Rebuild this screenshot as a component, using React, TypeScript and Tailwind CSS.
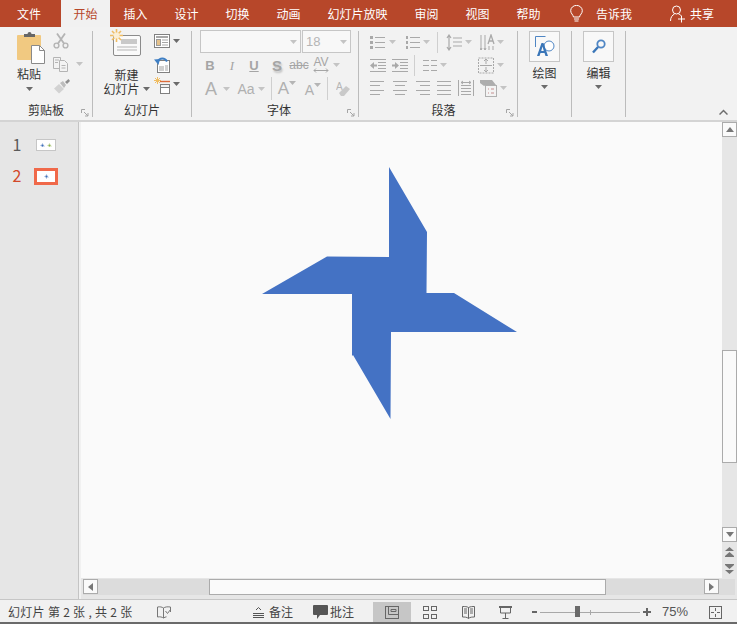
import React from "react";

const G = "#a9a9a9";
const D = "#6b6b6b";

function Caret({ c = "#a9a9a9", className = "" }: { c?: string; className?: string }) {
  return (
    <svg width="7" height="4" viewBox="0 0 7 4" className={className}>
      <path d="M0 0h7L3.500 4z" fill={c} />
    </svg>
  );
}

function Launcher() {
  return (
    <svg width="8" height="8" viewBox="0 0 8 8" fill="none" stroke="#a5a5a5">
      <path d="M.5 4V.5H4M3 3l4 4M7 4v3H4" />
    </svg>
  );
}

function Lines({ w = 16, rows, c = G }: { w?: number; rows: [number, number][]; c?: string }) {
  const h = 14;
  const step = rows.length > 1 ? (h - 1) / (rows.length - 1) : 0;
  return (
    <svg width={w} height={h} viewBox={`0 0 ${w} ${h}`}>
      {rows.map(([a, b], i) => (
        <rect key={i} x={a} y={Math.round(i * step)} width={b - a} height="1" fill={c} />
      ))}
    </svg>
  );
}

function Paste() {
  return (
    <svg width="30" height="34" viewBox="0 0 30 34">
      <rect x="1" y="4" width="24" height="25" rx="1" fill="#f1c981" />
      <path d="M8 5V3h3.500a2 2 0 0 1 4 0H19v3H8z" fill="#666" />
      <path d="M15.500 14.500h8l5 5v13h-13z" fill="#fff" stroke="#8a8a8a" />
      <path d="M23.500 14.500v5h5" fill="none" stroke="#8a8a8a" />
    </svg>
  );
}

function Scissors() {
  return (
    <svg width="16" height="16" viewBox="0 0 16 16" fill="none" stroke="#b4b4b4" strokeWidth="1.400">
      <circle cx="3.500" cy="12.500" r="2.400" />
      <circle cx="12.500" cy="12.500" r="2.400" />
      <path d="M5 10.500 12 .5M11 10.500 4 .5" strokeWidth="1.800" />
    </svg>
  );
}

function CopyIcon() {
  return (
    <svg width="16" height="16" viewBox="0 0 16 16" fill="#f3f3f3" stroke="#b4b4b4">
      <path d="M.5 1.500h7v11h-7z" />
      <path d="M6.500 4.500h5l3 3v8h-8z" />
      <path d="M2 4h4M2 6.500h3M8.500 9.500h4M8.500 12h4" />
    </svg>
  );
}

function Brush() {
  return (
    <svg width="17" height="15" viewBox="0 0 17 15">
      <path d="M1 9.500 6 5l5 5-5 4.500z" fill="#d2d2d2" />
      <path d="M7 4l3-2 3 4-2 3z" fill="#bdbdbd" />
      <path d="M12 3l3.500-3L17 2l-3 3z" fill="#8f8f8f" />
    </svg>
  );
}

function NewSlide() {
  return (
    <svg width="31" height="28" viewBox="0 0 31 28">
      <rect x="3.500" y="6.500" width="27" height="20" rx="1.500" fill="#fafafa" stroke="#8b8b8b" />
      <rect x="11" y="10" width="16" height="5" fill="#c9c9c9" />
      <path d="M7 18h20M7 21h20" stroke="#b5b5b5" />
      <g stroke="#f0bd62" strokeWidth="1.600">
        <path d="M6.500 0v13M0 6.500h13M2 2l9 9M11 2l-9 9" />
      </g>
      <circle cx="6.500" cy="6.500" r="3" fill="#fbefd5" />
    </svg>
  );
}

function Layout() {
  return (
    <svg width="16" height="14" viewBox="0 0 16 14" fill="#fff" stroke="#808080">
      <rect x=".5" y=".5" width="15" height="13" />
      <path d="M2 3h12" stroke="#8a8a8a" strokeWidth="1.500" />
      <rect x="2.500" y="5.500" width="4" height="6" fill="#e5c28c" stroke="#9a9a9a" />
      <path d="M8 6h6M8 8.500h6M8 11h6" stroke="#a5a5a5" />
    </svg>
  );
}

function Reset() {
  return (
    <svg width="16" height="16" viewBox="0 0 16 16" fill="none">
      <rect x="3.500" y="3.500" width="12" height="12" fill="#fff" stroke="#808080" />
      <rect x="5" y="9" width="5" height="5" fill="#cfcfcf" />
      <path d="M11 9h3M11 11h3M11 13h3" stroke="#a5a5a5" />
      <path d="M13 4.500C11 .5 5.500.500 4 4.500" stroke="#3f7fc4" strokeWidth="2" />
      <path d="M0 2.500 6 2 4.500 8z" fill="#3f7fc4" />
    </svg>
  );
}

function Section() {
  return (
    <svg width="16" height="18" viewBox="0 0 16 18" fill="none">
      <g stroke="#f0bd62" strokeWidth="1">
        <path d="M3.500 0v7M0 3.500h7M1 1l5 5M6 1 1 6" />
      </g>
      <path d="M6 4.500h10" stroke="#dc6b3a" strokeWidth="1.400" />
      <rect x="6.500" y="7.500" width="9" height="3" stroke="#808080" />
      <rect x="6.500" y="10.500" width="9" height="6" fill="#fff" stroke="#808080" />
    </svg>
  );
}

function Bullets() {
  return (
    <svg width="15" height="14" viewBox="0 0 15 14">
      {[1, 6, 11].map((y) => (
        <g key={y}>
          <rect x="0" y={y} width="3" height="3" fill={G} />
          <rect x="5" y={y + 1} width="10" height="1" fill={G} />
        </g>
      ))}
    </svg>
  );
}

function Numbered() {
  return (
    <svg width="15" height="15" viewBox="0 0 15 15">
      {[1, 6, 11].map((y) => (
        <g key={y}>
          <rect x="1" y={y} width="2" height="3" fill={G} />
          <rect x="5" y={y + 1} width="10" height="1" fill={G} />
        </g>
      ))}
    </svg>
  );
}

function Spacing() {
  return (
    <svg width="16" height="17" viewBox="0 0 16 17" fill="none" stroke={G}>
      <path d="M3 1v15M1 4l2-3 2 3M1 13l2 3 2-3" strokeWidth="1.200" />
      <path d="M7 4h9M7 8h9M7 12h9" />
    </svg>
  );
}

function Dir() {
  return (
    <svg width="15" height="17" viewBox="0 0 15 17" fill="none" stroke={G}>
      <path d="M1 1v15M5 1v15M1 16l-1-2M1 16l1-2M5 16 4 14M5 16l1-2" />
      <path d="M8 10l3-9 3 9M9 7h4" strokeWidth="1.300" />
      <path d="M9 12v4M13 12v4" />
    </svg>
  );
}

function Indent({ flip = false }: { flip?: boolean }) {
  return (
    <svg width="16" height="13" viewBox="0 0 16 13" fill="none" stroke={G}>
      <path d="M0 .5h16M8 3.500h8M8 6.500h8M8 9.500h8M0 12.500h16" />
      <path d={flip ? "M0 6.500h3" : "M3 6.500h4"} strokeWidth="2" />
      <path d={flip ? "M3 3v7l4-3.500z" : "M4 3v7L0 6.500z"} fill={G} stroke="none" />
    </svg>
  );
}

function Columns() {
  return (
    <svg width="14" height="13" viewBox="0 0 14 13" fill="none" stroke={G}>
      <path d="M0 1.500h6M8 1.500h6M0 6.500h6M8 6.500h6M0 11.500h6M8 11.500h6" />
    </svg>
  );
}

function AlignText() {
  return (
    <svg width="16" height="17" viewBox="0 0 16 17" fill="none" stroke={G}>
      <path d="M.5 16V1h15v15z" strokeDasharray="2 1" />
      <path d="M8 2v5M6 4l2-2 2 2M8 15v-5M6 13l2 2 2-2M2 8.500h12" />
    </svg>
  );
}

function Distributed() {
  return (
    <svg width="16" height="16" viewBox="0 0 16 16" fill="none" stroke={G}>
      <path d="M.5 0v16M15.500 0v16M3 5.500h10M3 8.500h10M3 11.500h10M3 14.500h10" />
      <path d="M3 2.500h10M3 2.500l2-1.500M3 2.500l2 1.500M13 2.500 11 1M13 2.500 11 4" />
    </svg>
  );
}

function SmartArt() {
  return (
    <svg width="17" height="18" viewBox="0 0 17 18" fill="none">
      <path d="M0 1h12l4 5H6L4 7 0 4z" fill="#adadad" />
      <rect x="5.500" y="6.500" width="11" height="11" fill="#f3f3f3" stroke="#b0b0b0" />
      <path d="M8 10h1M8 14h1M11 10h3M11 14h3" stroke="#c58f8f" />
    </svg>
  );
}

function DrawIcon() {
  return (
    <svg width="20" height="21" viewBox="0 0 20 21" fill="none">
      <path d="M.5 11V.5h10" stroke="#4f86c4" />
      <circle cx="14" cy="10" r="5" fill="#fff" stroke="#4f86c4" />
      <path d="M2 20 6.500 7h2L13 20h-2.500l-1-3h-4l-1 3zM6.200 15h2.600L7.500 10.500z" fill="#3a76b8" />
    </svg>
  );
}

function FindIcon() {
  return (
    <svg width="14" height="15" viewBox="0 0 14 15" fill="none">
      <circle cx="9" cy="5" r="3.700" stroke="#4f86c4" strokeWidth="1.800" />
      <path d="M6 8 1 13.500" stroke="#3a76b8" strokeWidth="2.400" />
    </svg>
  );
}

function Star({ w, c }: { w: number; c: string }) {
  return (
    <svg width={w} height={(w * 252) / 255} viewBox="0 0 255 252" className="shrink-0">
      <path
        d="M127 0 165 65 164.500 126 192 126 255 165 129 165 128.500 252 91 188 90 189 90 127 0 127 65 89.500 127 90z"
        fill={c}
      />
    </svg>
  );
}

function Arrow({ d }: { d: "u" | "d" | "l" | "r" }) {
  const p = { u: "M0 5 4 0l4 5z", d: "M0 0l4 5 4-5z", l: "M5 0 0 4l5 4z", r: "M0 0l5 4-5 4z" }[d];
  const cls = d === "u" || d === "d" ? "w-[8px] h-[5px]" : "w-[5px] h-[8px]";
  const vb = d === "u" || d === "d" ? "0 0 8 5" : "0 0 5 8";
  return (
    <svg viewBox={vb} className={cls}>
      <path d={p} fill="#777" />
    </svg>
  );
}

function DoubleArrow({ up }: { up?: boolean }) {
  return (
    <svg width="9" height="10" viewBox="0 0 9 10">
      {up ? <path d="M0 4 4.500 0 9 4zM0 9l4.500-4L9 9zM0 9h9v1H0z" fill="#777" /> : <path d="M0 0h9v1H0zM0 1l4.500 4L9 1zM0 6l4.500 4L9 6z" fill="#777" />}
    </svg>
  );
}

function ScrollBtn({ children }: { children: React.ReactNode }) {
  return (
    <div className="w-[15px] h-[15px] bg-[#fafafa] border border-[#ababab] flex items-center justify-center shrink-0">{children}</div>
  );
}

const tabs: [string, string][] = [
  ["文件", "w-[61px] pr-[3px]"],
  ["开始", "w-[49px] bg-[#f1f1f1] text-[#b7472a]"],
  ["插入", "w-[51px]"],
  ["设计", "w-[51px]"],
  ["切换", "w-[51px]"],
  ["动画", "w-[51px]"],
  ["幻灯片放映", "w-[87px]"],
  ["审阅", "w-[51px]"],
  ["视图", "w-[51px]"],
  ["帮助", "w-[51px]"],
];

function GroupLabel({ children, launcher }: { children: React.ReactNode; launcher?: boolean }) {
  return (
    <div className="mt-auto h-[14px] flex items-center justify-center relative text-[12px] leading-[14px] text-[#333]">
      {children}
      {launcher && (
        <span className="absolute right-[3px] bottom-[0px] flex">
          <Launcher />
        </span>
      )}
    </div>
  );
}

export default function App() {
  return (
    <div className="w-[737px] h-[624px] overflow-hidden flex flex-col bg-[#f1f1f1] font-['Noto_Sans_CJK_SC','Liberation_Sans',sans-serif] text-[#333]">
      {/* title tabs */}
      <div className="h-[27px] shrink-0 bg-[#b7472a] flex items-stretch text-[12px] text-white">
        {tabs.map(([t, w]) => (
          <div key={t} className={`${w} flex items-center justify-center`}>
            {t}
          </div>
        ))}
        <div className="ml-[16px] w-[14px] flex items-center">
          <svg width="13" height="18" viewBox="0 0 13 18" fill="none" stroke="#fff">
            <path d="M3.500 12C3 9.500.7 8.500.7 5.700a5.800 5.300 0 0 1 11.600 0C12.300 8.500 10 9.500 9.500 12z" />
            <path d="M4 14h5M4.500 16h4" />
          </svg>
        </div>
        <div className="ml-[12px] flex items-center">告诉我</div>
        <div className="ml-[38px] flex items-center">
          <svg width="16" height="18" viewBox="0 0 16 18" fill="none" stroke="#fff">
            <circle cx="6.500" cy="5" r="4" />
            <path d="M.5 16c0-4 2-6 4-7M8.500 9c1 .3 1.800.8 2.400 1.500M8 14h7M11.500 10.500V17.500" />
          </svg>
        </div>
        <div className="ml-[4px] flex items-center">共享</div>
      </div>

      {/* ribbon */}
      <div className="h-[95px] shrink-0 border-b-2 border-[#d4d4d4] bg-[#f2f2f2] flex pt-[4px] pb-[3px] relative">
        {/* clipboard */}
        <div className="w-[93px] border-r border-[#bcbcbc] flex flex-col">
          <div className="flex">
            <div className="w-[54px] pl-[16px] flex flex-col items-start">
              <Paste />
              <div className="text-[12px] leading-[16px] text-[#333] w-[26px] text-center mt-[1px]">粘贴</div>
              <Caret c={D} className="mt-[5px] ml-[10px]" />
            </div>
            <div className="flex flex-col gap-[7px] pt-[2px] -ml-[1px]">
              <Scissors />
              <div className="flex items-center gap-[7px]">
                <CopyIcon />
                <Caret c="#c4c4c4" />
              </div>
              <Brush />
            </div>
          </div>
          <GroupLabel launcher>剪贴板</GroupLabel>
        </div>

        {/* slides */}
        <div className="w-[99px] border-r border-[#bcbcbc] flex flex-col">
          <div className="flex">
            <div className="w-[61px] flex flex-col items-center pl-[6px]">
              <div className="-mt-[2px] -ml-[2px]">
                <NewSlide />
              </div>
              <div className="text-[12px] leading-[14px] text-[#333] mt-[11px]">新建</div>
              <div className="text-[12px] leading-[14px] text-[#333] flex items-center gap-[3px] whitespace-nowrap">
                幻灯片
                <Caret c={D} />
              </div>
            </div>
            <div className="flex flex-col pt-[3px]">
              <div className="h-[23px] flex items-start gap-[3px]">
                <Layout />
                <Caret c={D} className="mt-[5px]" />
              </div>
              <div className="h-[20px]">
                <Reset />
              </div>
              <div className="flex items-start gap-[3px]">
                <Section />
                <Caret c={D} className="mt-[5px]" />
              </div>
            </div>
          </div>
          <GroupLabel>幻灯片</GroupLabel>
        </div>

        {/* font */}
        <div className="w-[167px] border-r border-[#bcbcbc] flex flex-col pl-[8px]">
          <div className="flex h-[23px] -mt-[1px] gap-[1px] text-[13px] text-[#b5b5b5]">
            <div className="w-[101px] bg-[#f8f8f8] border border-[#c6c6c6] flex items-center justify-end pr-[3px]">
              <Caret c="#c4c4c4" />
            </div>
            <div className="w-[49px] bg-[#f8f8f8] border border-[#c6c6c6] flex items-center justify-between pl-[3px] pr-[3px] font-['Liberation_Sans',sans-serif]">
              18
              <Caret c="#c4c4c4" />
            </div>
          </div>
          <div className="flex items-center h-[18px] mt-[3px] -ml-[1px] text-[13px] leading-none text-[#a5a5a5] font-['Liberation_Sans',sans-serif]">
            <span className="w-[22px] text-center font-bold">B</span>
            <span className="w-[22px] text-center italic font-['Liberation_Serif',serif]">I</span>
            <span className="w-[22px] text-center underline font-bold">U</span>
            <span className="w-[22px] ml-[1px] text-center font-bold text-[15px] [text-shadow:1px_2px_2px_#c0c0c0]">S</span>
            <span className="w-[22px] text-center line-through text-[12px]">abc</span>
            <span className="w-[22px] flex flex-col items-center text-[12px] leading-[11px]">
              AV
              <svg width="16" height="5" viewBox="0 0 16 5" fill="none" stroke="#a5a5a5">
                <path d="M1 2.500h14M3 .5l-2 2 2 2M13 .5l2 2-2 2" />
              </svg>
            </span>
            <Caret c="#c4c4c4" className="ml-[1px]" />
          </div>
          <div className="flex items-center h-[25px] mt-[2px] pl-[1px] text-[#b0b0b0] font-['Liberation_Sans',sans-serif]">
            <span className="w-[20px] text-center text-[18px] leading-none">A</span>
            <Caret c="#c4c4c4" className="ml-[2px]" />
            <span className="w-[24px] ml-[4px] text-center text-[14px] leading-none">Aa</span>
            <Caret c="#c4c4c4" />
            <span className="w-px h-[23px] bg-[#cfcfcf] ml-[6px]" />
            <span className="w-[28px] ml-[1px] flex justify-center items-start text-[17px] leading-none">
              A
              <Caret c="#b5b5b5" className="mt-[1px]" />
            </span>
            <span className="w-[22px] ml-[1px] flex justify-center items-start text-[14px] leading-none pt-[2px]">
              A
              <Caret c="#b5b5b5" />
            </span>
            <span className="w-px h-[23px] bg-[#cfcfcf] ml-[3px]" />
            <span className="ml-[8px] flex">
              <svg width="15" height="16" viewBox="0 0 15 16">
                <text x="0" y="9" fontSize="10" fill="#b5b5b5" fontFamily="Liberation Sans">A</text>
                <path d="M3 12 10 5l4 3-6 7H5z" fill="#c9c9c9" />
              </svg>
            </span>
          </div>
          <GroupLabel launcher>字体</GroupLabel>
        </div>

        {/* paragraph */}
        <div className="w-[159px] border-r border-[#bcbcbc] flex flex-col pl-[11px]">
          <div className="flex items-center h-[20px] mt-[1px]">
            <Bullets />
            <Caret c="#c4c4c4" className="ml-[4px]" />
            <span className="ml-[9px] flex"><Numbered /></span>
            <Caret c="#c4c4c4" className="ml-[3px]" />
            <span className="w-px h-[21px] bg-[#cfcfcf] ml-[7px]" />
            <span className="ml-[8px] flex"><Spacing /></span>
            <Caret c="#c4c4c4" className="ml-[3px]" />
            <span className="ml-[8px] flex"><Dir /></span>
            <Caret c="#c4c4c4" className="ml-[2px]" />
          </div>
          <div className="flex items-center h-[20px] mt-[3px]">
            <Indent />
            <span className="ml-[6px] flex"><Indent flip /></span>
            <span className="w-px h-[21px] bg-[#cfcfcf] ml-[6px]" />
            <span className="ml-[8px] flex"><Columns /></span>
            <Caret c="#c4c4c4" className="ml-[3px]" />
            <span className="ml-[31px] flex"><AlignText /></span>
            <Caret c="#c4c4c4" className="ml-[3px]" />
          </div>
          <div className="flex items-center h-[20px] mt-[3px]">
            <Lines rows={[[0, 14], [0, 10], [0, 14], [0, 10]]} />
            <span className="ml-[6px] flex"><Lines rows={[[1, 15], [3, 13], [1, 15], [3, 13]]} /></span>
            <span className="ml-[6px] flex"><Lines rows={[[2, 16], [6, 16], [2, 16], [6, 16]]} /></span>
            <span className="ml-[6px] flex"><Lines rows={[[1, 15], [1, 15], [1, 15], [1, 15]]} /></span>
            <span className="ml-[6px] flex"><Distributed /></span>
            <span className="ml-[6px] flex"><SmartArt /></span>
            <Caret c="#c4c4c4" className="ml-[3px]" />
          </div>
          <GroupLabel launcher>段落</GroupLabel>
        </div>

        {/* draw */}
        <div className="w-[54px] border-r border-[#bcbcbc] flex flex-col items-center">
          <div className="w-[31px] h-[31px] bg-[#f8f8f8] border border-[#c6c6c6] flex items-center justify-center">
            <DrawIcon />
          </div>
          <div className="text-[12px] leading-[16px] text-[#333] mt-[3px]">绘图</div>
          <Caret c={D} className="mt-[4px]" />
        </div>

        {/* edit */}
        <div className="w-[54px] border-r border-[#bcbcbc] flex flex-col items-center">
          <div className="w-[31px] h-[31px] bg-[#f8f8f8] border border-[#c6c6c6] flex items-center justify-center">
            <FindIcon />
          </div>
          <div className="text-[12px] leading-[16px] text-[#333] mt-[3px]">编辑</div>
          <Caret c={D} className="mt-[4px]" />
        </div>

        <span className="absolute right-[9px] bottom-[5px] flex">
          <svg width="9" height="6" viewBox="0 0 9 6" fill="none" stroke="#6e6e6e" strokeWidth="1.500">
            <path d="M.5 5.500 4.500 1.500l4 4" />
          </svg>
        </span>
      </div>

      {/* main */}
      <div className="flex-1 min-h-0 flex">
        {/* thumbnails */}
        <div className="w-[81px] shrink-0 bg-[#e6e6e6] border-r-[2px] border-[#f1f1f1] flex">
          <div className="w-[79px] border-r border-[#c4c4c4] flex flex-col text-[16px] leading-[20px]">
            <div className="flex items-center h-[20px] mt-[12px]">
              <span className="w-[34px] text-center text-[#5a5a5a]">1</span>
              <div className="ml-[2px] mt-[2px] w-[20px] h-[12px] bg-white border border-[#c6c6c6] flex items-center justify-center gap-[2px]">
                <Star w={5} c="#3e6fb8" />
                <Star w={5} c="#8db24a" />
              </div>
            </div>
            <div className="flex items-center h-[20px] mt-[11px]">
              <span className="w-[34px] text-center text-[#d2492a]">2</span>
              <div className="mt-[3px] w-[24px] h-[17px] bg-white border-[3px] border-[#f0694a] flex items-center justify-center">
                <Star w={5} c="#3e6fb8" />
              </div>
            </div>
          </div>
        </div>

        {/* canvas and scrollbars */}
        <div className="flex-1 min-w-0 flex flex-col">
          <div className="flex-1 min-h-0 flex">
            <div className="flex-1 bg-[#fafafa] pl-[181px] pt-[45px]">
              <Star w={255} c="#4472c4" />
            </div>
            <div className="w-[15px] shrink-0 bg-[#e6e6e6] flex flex-col items-stretch">
              <ScrollBtn><Arrow d="u" /></ScrollBtn>
              <div className="h-[113px] mt-[213px] bg-[#fafafa] border border-[#ababab]" />
              <div className="mt-auto flex flex-col items-center">
                <ScrollBtn><Arrow d="d" /></ScrollBtn>
                <div className="h-[17px] mt-[1px] flex items-center"><DoubleArrow up /></div>
                <div className="h-[18px] flex items-center"><DoubleArrow /></div>
              </div>
            </div>
          </div>
          <div className="h-[21px] shrink-0 bg-[#e6e6e6] pl-[2px] pr-[2px] pt-[1px]">
            <div className="h-[16px] flex bg-[#dcdcdc] items-stretch">
              <ScrollBtn><Arrow d="l" /></ScrollBtn>
              <div className="w-[397px] ml-[111px] bg-[#fafafa] border border-[#ababab]" />
              <div className="ml-[98px]"><ScrollBtn><Arrow d="r" /></ScrollBtn></div>
            </div>
          </div>
        </div>
      </div>

      {/* status */}
      <div className="h-[25px] shrink-0 border-t border-[#c6c6c6] border-b-2 border-b-[#6a6a6a] bg-[#f1f1f1] pt-[2px] flex items-center text-[12px] text-[#444]">
        <span className="ml-[8px] w-[130px] whitespace-nowrap tracking-[0.3px]">幻灯片 第 2 张 , 共 2 张</span>
        <span className="ml-[19px] flex">
          <svg width="14" height="13" viewBox="0 0 14 13" fill="none" stroke="#777">
            <path d="M6.500 2C5 1 3 .5.500 1v10c2.500-.5 4.500 0 6 1 1-.7 2-1 3-1.200M6.500 2v10M6.500 2c1.500-1 3.500-1.500 7-1v5" />
            <path d="M8.500 5l2 2.500 3-4" />
          </svg>
        </span>
        <span className="ml-[82px] flex">
          <svg width="11" height="11" viewBox="0 0 11 11" fill="none" stroke="#555">
            <path d="M0 6.500h11M0 8.500h11M0 10.500h11M3 3l2.500-2.500L8 3" />
          </svg>
        </span>
        <span className="ml-[5px]">备注</span>
        <span className="ml-[20px] flex">
          <svg width="15" height="14" viewBox="0 0 15 14">
            <path d="M1 0h13a1 1 0 0 1 1 1v8a1 1 0 0 1-1 1H7l-3 4v-4H1a1 1 0 0 1-1-1V1a1 1 0 0 1 1-1z" fill="#555" />
          </svg>
        </span>
        <span className="ml-[2px]">批注</span>
        <div className="ml-[19px] w-[38px] h-full bg-[#c6c6c6] flex items-center justify-center">
          <svg width="14" height="13" viewBox="0 0 14 13" fill="none" stroke="#666">
            <rect x=".5" y=".5" width="13" height="12" />
            <path d="M3.500.5v8h10M6 3.500h5v2H6z" />
          </svg>
        </div>
        <div className="w-[38px] flex justify-center">
          <svg width="14" height="13" viewBox="0 0 14 13" fill="none" stroke="#666">
            <rect x=".5" y=".5" width="5" height="4" />
            <rect x="8.500" y=".5" width="5" height="4" />
            <rect x=".5" y="8.500" width="5" height="4" />
            <rect x="8.500" y="8.500" width="5" height="4" />
          </svg>
        </div>
        <div className="w-[38px] flex justify-center">
          <svg width="13" height="13" viewBox="0 0 13 13" fill="none" stroke="#666">
            <path d="M6.500 1.500C5 .5 3 .5.500.5v10.500c2 0 4.500 0 6 1.500 1.500-1.500 4-1.500 6-1.500V.5c-2 0-4 0-6 1zM6.500 1.500v11M2 3h3M2 5h3M2 7h3M8 3h3M8 5h3M8 7h3" />
          </svg>
        </div>
        <div className="w-[37px] flex justify-center">
          <svg width="13" height="13" viewBox="0 0 13 13" fill="none" stroke="#666">
            <path d="M0 1h13" strokeWidth="2" />
            <path d="M1.500 2v5h10V2M6.500 7v5M3.500 12.500h6" />
          </svg>
        </div>
        <div className="ml-[8px] w-[5px] h-[2px] bg-[#666]" />
        <div className="ml-[3px] w-[100px] h-[9px] flex items-center relative">
          <div className="w-full h-px bg-[#a8a8a8]" />
          <div className="absolute left-[35px] top-[-2px] w-[5px] h-[11px] bg-[#6a6a6a]" />
          <div className="absolute left-[50px] top-[2px] w-px h-[5px] bg-[#a8a8a8]" />
        </div>
        <svg width="8" height="8" viewBox="0 0 8 8" className="ml-[3px]">
          <path d="M3 0h2v3h3v2H5v3H3V5H0V3h3z" fill="#666" />
        </svg>
        <span className="ml-[11px] w-[28px] font-['Liberation_Sans',sans-serif] text-[13px] text-[#555]">75%</span>
        <span className="ml-[19px] flex">
          <svg width="13" height="13" viewBox="0 0 13 13" fill="none" stroke="#666">
            <rect x=".5" y=".5" width="12" height="12" />
            <path d="M6.500 2v3M6.500 8v3M2 6.500h3M8 6.500h3" />
          </svg>
        </span>
      </div>
    </div>
  );
}
